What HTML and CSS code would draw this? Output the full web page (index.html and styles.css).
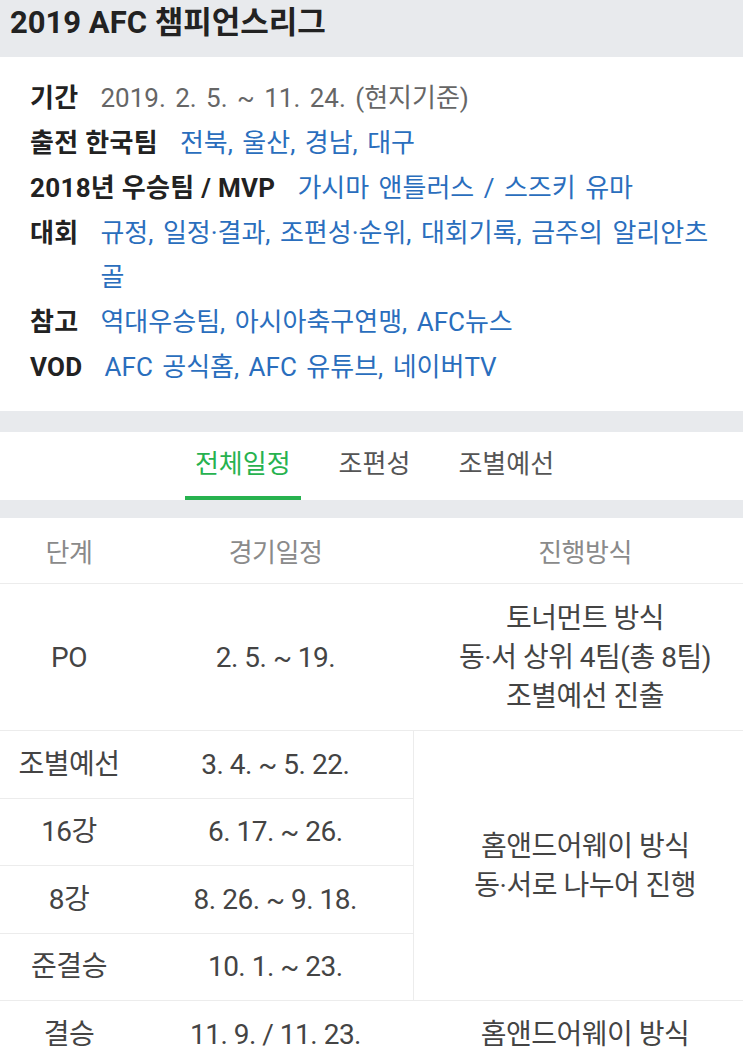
FILE: index.html
```html
<!DOCTYPE html>
<html lang="ko">
<head>
<meta charset="utf-8">
<title>2019 AFC 챔피언스리그</title>
<link rel="stylesheet" href="styles.css">
</head>
<body>
<header class="title-bar">
  <h1 class="title">2019 AFC 챔피언스리그</h1>
</header>

<section class="info">
  <div class="info-row">
    <span class="label">기간</span>
    <span class="value plain">2019. 2. 5. ~ 11. 24. (현지기준)</span>
  </div>
  <div class="info-row">
    <span class="label">출전 한국팀</span>
    <span class="value"><a class="link">전북</a>, <a class="link">울산</a>, <a class="link">경남</a>, <a class="link">대구</a></span>
  </div>
  <div class="info-row">
    <span class="label">2018년 우승팀 / MVP</span>
    <span class="value"><a class="link">가시마 앤틀러스</a> / <a class="link">스즈키 유마</a></span>
  </div>
  <div class="info-row">
    <span class="label">대회</span>
    <span class="value"><a class="link">규정</a>, <a class="link">일정·결과</a>, <a class="link">조편성·순위</a>, <a class="link">대회기록</a>, <a class="link"><span>금주의 알리안츠</span> <span>골</span></a></span>
  </div>
  <div class="info-row">
    <span class="label">참고</span>
    <span class="value"><a class="link">역대우승팀</a>, <a class="link">아시아축구연맹</a>, <a class="link">AFC뉴스</a></span>
  </div>
  <div class="info-row">
    <span class="label">VOD</span>
    <span class="value"><a class="link">AFC 공식홈</a>, <a class="link">AFC 유튜브</a>, <a class="link">네이버TV</a></span>
  </div>
</section>

<div class="gap gap-top"></div>

<nav class="tabs">
  <span class="tab active">전체일정</span>
  <span class="tab">조편성</span>
  <span class="tab">조별예선</span>
</nav>

<div class="gap gap-bottom"></div>

<div class="table-wrap">
  <table class="schedule">
    <colgroup>
      <col class="c1">
      <col class="c2">
      <col class="c3">
    </colgroup>
    <thead>
      <tr>
        <th>단계</th>
        <th>경기일정</th>
        <th>진행방식</th>
      </tr>
    </thead>
    <tbody>
      <tr class="row-tall">
        <td>PO</td>
        <td>2. 5. ~ 19.</td>
        <td class="multi">토너먼트 방식<br>동·서 상위 4팀(총 8팀)<br>조별예선 진출</td>
      </tr>
      <tr>
        <td>조별예선</td>
        <td>3. 4. ~ 5. 22.</td>
        <td class="multi span" rowspan="4">홈앤드어웨이 방식<br>동·서로 나누어 진행</td>
      </tr>
      <tr>
        <td>16강</td>
        <td>6. 17. ~ 26.</td>
      </tr>
      <tr>
        <td>8강</td>
        <td>8. 26. ~ 9. 18.</td>
      </tr>
      <tr>
        <td>준결승</td>
        <td>10. 1. ~ 23.</td>
      </tr>
      <tr>
        <td>결승</td>
        <td>11. 9. / 11. 23.</td>
        <td>홈앤드어웨이 방식</td>
      </tr>
    </tbody>
  </table>
</div>
</body>
</html>
```

FILE: styles.css
```css
html, body {
  margin: 0;
  padding: 0;
  background: #ffffff;
}

body {
  font-family: Roboto, "Noto Sans CJK KR", sans-serif;
  color: #222222;
  overflow: hidden;
}

.title-bar {
  background: #e8eaed;
  padding: 0 10px 11px;
}

.title {
  margin: 0;
  font-size: 31px;
  font-weight: 700;
  line-height: 46px;
  color: #222222;
}

.info {
  background: #ffffff;
  margin-left: 2px;
  padding: 19px 20px 22px 28px;
}

.info-row {
  display: flex;
  gap: 22px;
  font-size: 26px;
  line-height: 44px;
  margin-bottom: 1px;
}

.info-row:last-child {
  margin-bottom: 0;
}

.label {
  flex: none;
  font-weight: 700;
  color: #222222;
  letter-spacing: 0.3px;
}

.value {
  flex: 1;
  color: #2a6ebd;
  word-spacing: 3px;
}

.value.plain {
  color: #666666;
}

.link {
  color: #2a6ebd;
  text-decoration: none;
}

.gap {
  background: #e8eaed;
}

.gap-top {
  height: 21px;
}

.gap-bottom {
  height: 18px;
}

.tabs {
  display: flex;
  justify-content: center;
  gap: 28px;
  background: #ffffff;
  height: 68px;
  padding-left: 6px;
  box-sizing: border-box;
}

.tab {
  padding: 14px 10px 0;
  font-size: 26px;
  line-height: 36px;
  color: #555555;
  border-bottom: 4px solid transparent;
}

.tab.active {
  color: #27b24f;
  border-bottom-color: #27b24f;
}

.table-wrap {
  overflow: hidden;
  width: 743px;
}

.schedule {
  width: 757px;
  table-layout: fixed;
  border-collapse: collapse;
  font-size: 28px;
  letter-spacing: -0.5px;
}

.c1 { width: 138px; }
.c2 { width: 275px; }
.c3 { width: 344px; }

.schedule th {
  height: 65px;
  padding: 0;
  font-size: 26px;
  font-weight: 400;
  color: #8a8a8a;
  text-align: center;
  vertical-align: middle;
  border-bottom: 1px solid #ececec;
}

.schedule td {
  height: 66.5px;
  padding: 0;
  text-align: center;
  vertical-align: middle;
  color: #444444;
  border-bottom: 1px solid #ececec;
  line-height: 39px;
}

.schedule .row-tall td {
  height: 146px;
}

.schedule td.span {
  border-left: 1px solid #ececec;
}
```
